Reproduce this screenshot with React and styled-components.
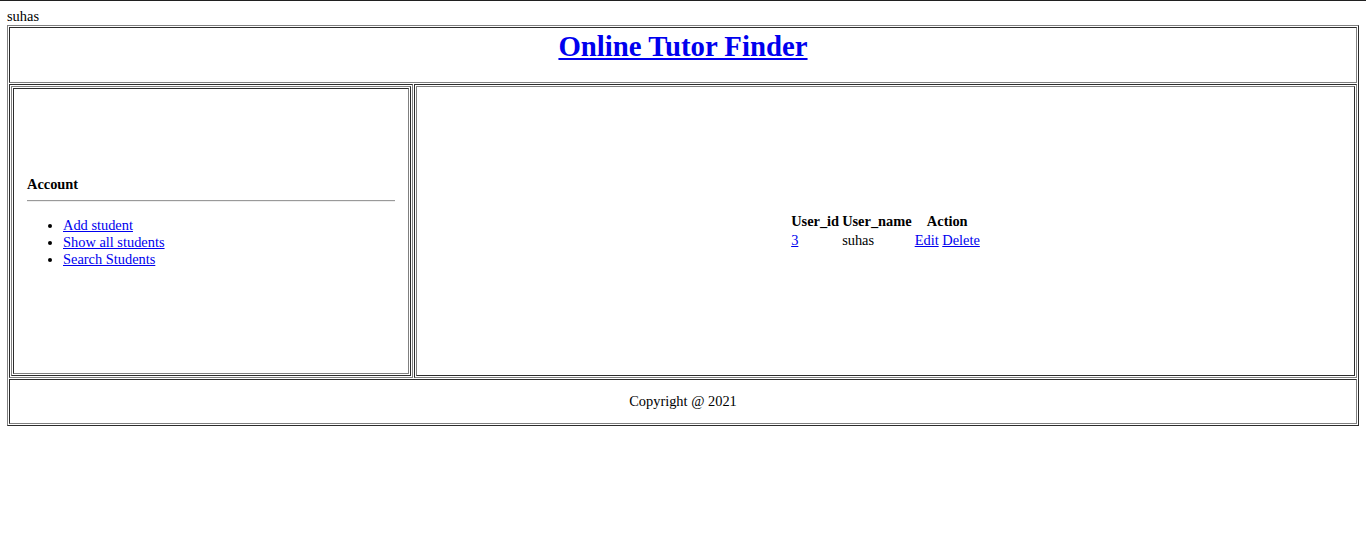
import React from "react";
import styled, { createGlobalStyle } from "styled-components";

const GlobalStyle = createGlobalStyle`
  html, body {
    margin: 0;
    padding: 0;
    background: #ffffff;
  }
  body {
    font-family: "Liberation Serif", "Times New Roman", serif;
    font-size: 14.4px;
    color: #000000;
  }
  * { box-sizing: border-box; }
`;

const Page = styled.div`
  border-top: 1px solid #202020;
  padding: 7.2px 7px 0;
`;

const UserLine = styled.div`
  height: 16.8px;
  line-height: normal;
`;

const Frame = styled.div`
  border: 1px outset grey;
  padding: 1px;
  display: flex;
  flex-direction: column;
  gap: 1px;
`;

const Cell = styled.div`
  border: 1px inset grey;
  padding: 1px;
`;

const HeaderCell = styled(Cell)`
  height: 56px;
  text-align: center;
`;

const Title = styled.h1`
  margin: 0 0 19px;
  font-size: 28.8px;
  line-height: 34px;
  font-weight: bold;
`;

const Link = styled.a`
  color: #0000ee;
  text-decoration: underline;
  cursor: pointer;
`;

const MiddleRow = styled.div`
  height: 294px;
  display: grid;
  grid-template-columns: 404px 1fr;
  column-gap: 1px;
`;

const RowCell = styled(Cell)`
  display: flex;
`;

const NestedFrame = styled.div`
  flex: 1;
  border: 1px outset grey;
  padding: 1px;
  display: flex;
  flex-direction: column;
  justify-content: center;
  align-items: ${(p) => (p.$center ? "center" : "stretch")};
`;

const Pane = styled.div`
  flex: 1;
  border: 1px inset grey;
  padding: 13px;
  display: flex;
  flex-direction: column;
  justify-content: center;
`;

const SectionTitle = styled.div`
  font-weight: bold;
`;

const Rule = styled.hr`
  border: none;
  border-top: 1px solid #9a9a9a;
  border-bottom: 1px solid #eeeeee;
  height: 0;
  margin: 7.2px 0 0;
`;

const NavList = styled.ul`
  margin: 14.4px 0 18px;
  padding-left: 36px;
  list-style: disc;
`;

const UsersTable = styled.table`
  border-collapse: separate;
  border-spacing: 1.8px 0.8px;
  font-size: 14.4px;
  margin-top: 1px;
`;

const Th = styled.th`
  padding: 1px;
  font-weight: bold;
  text-align: center;
`;

const Td = styled.td`
  padding: 1px;
  text-align: left;
`;

const FooterCell = styled(Cell)`
  padding: 13px 1px;
  line-height: 17px;
  text-align: center;
`;

const navItems = ["Add student", "Show all students", "Search Students"];

export default function App() {
  return (
    <>
      <GlobalStyle />
      <Page>
        <UserLine>suhas</UserLine>
        <Frame>
          <HeaderCell>
            <Title>
              <Link href="#">Online Tutor Finder</Link>
            </Title>
          </HeaderCell>
          <MiddleRow>
            <RowCell>
              <NestedFrame>
                <Pane>
                  <SectionTitle>Account</SectionTitle>
                  <Rule />
                  <NavList>
                    {navItems.map((item) => (
                      <li key={item}>
                        <Link href="#">{item}</Link>
                      </li>
                    ))}
                  </NavList>
                </Pane>
              </NestedFrame>
            </RowCell>
            <RowCell>
              <NestedFrame $center>
                <UsersTable>
                  <thead>
                    <tr>
                      <Th>User_id</Th>
                      <Th>User_name</Th>
                      <Th>Action</Th>
                    </tr>
                  </thead>
                  <tbody>
                    <tr>
                      <Td>
                        <Link href="#">3</Link>
                      </Td>
                      <Td>suhas</Td>
                      <Td>
                        <Link href="#">Edit</Link> <Link href="#">Delete</Link>
                      </Td>
                    </tr>
                  </tbody>
                </UsersTable>
              </NestedFrame>
            </RowCell>
          </MiddleRow>
          <FooterCell>Copyright @ 2021</FooterCell>
        </Frame>
      </Page>
    </>
  );
}
